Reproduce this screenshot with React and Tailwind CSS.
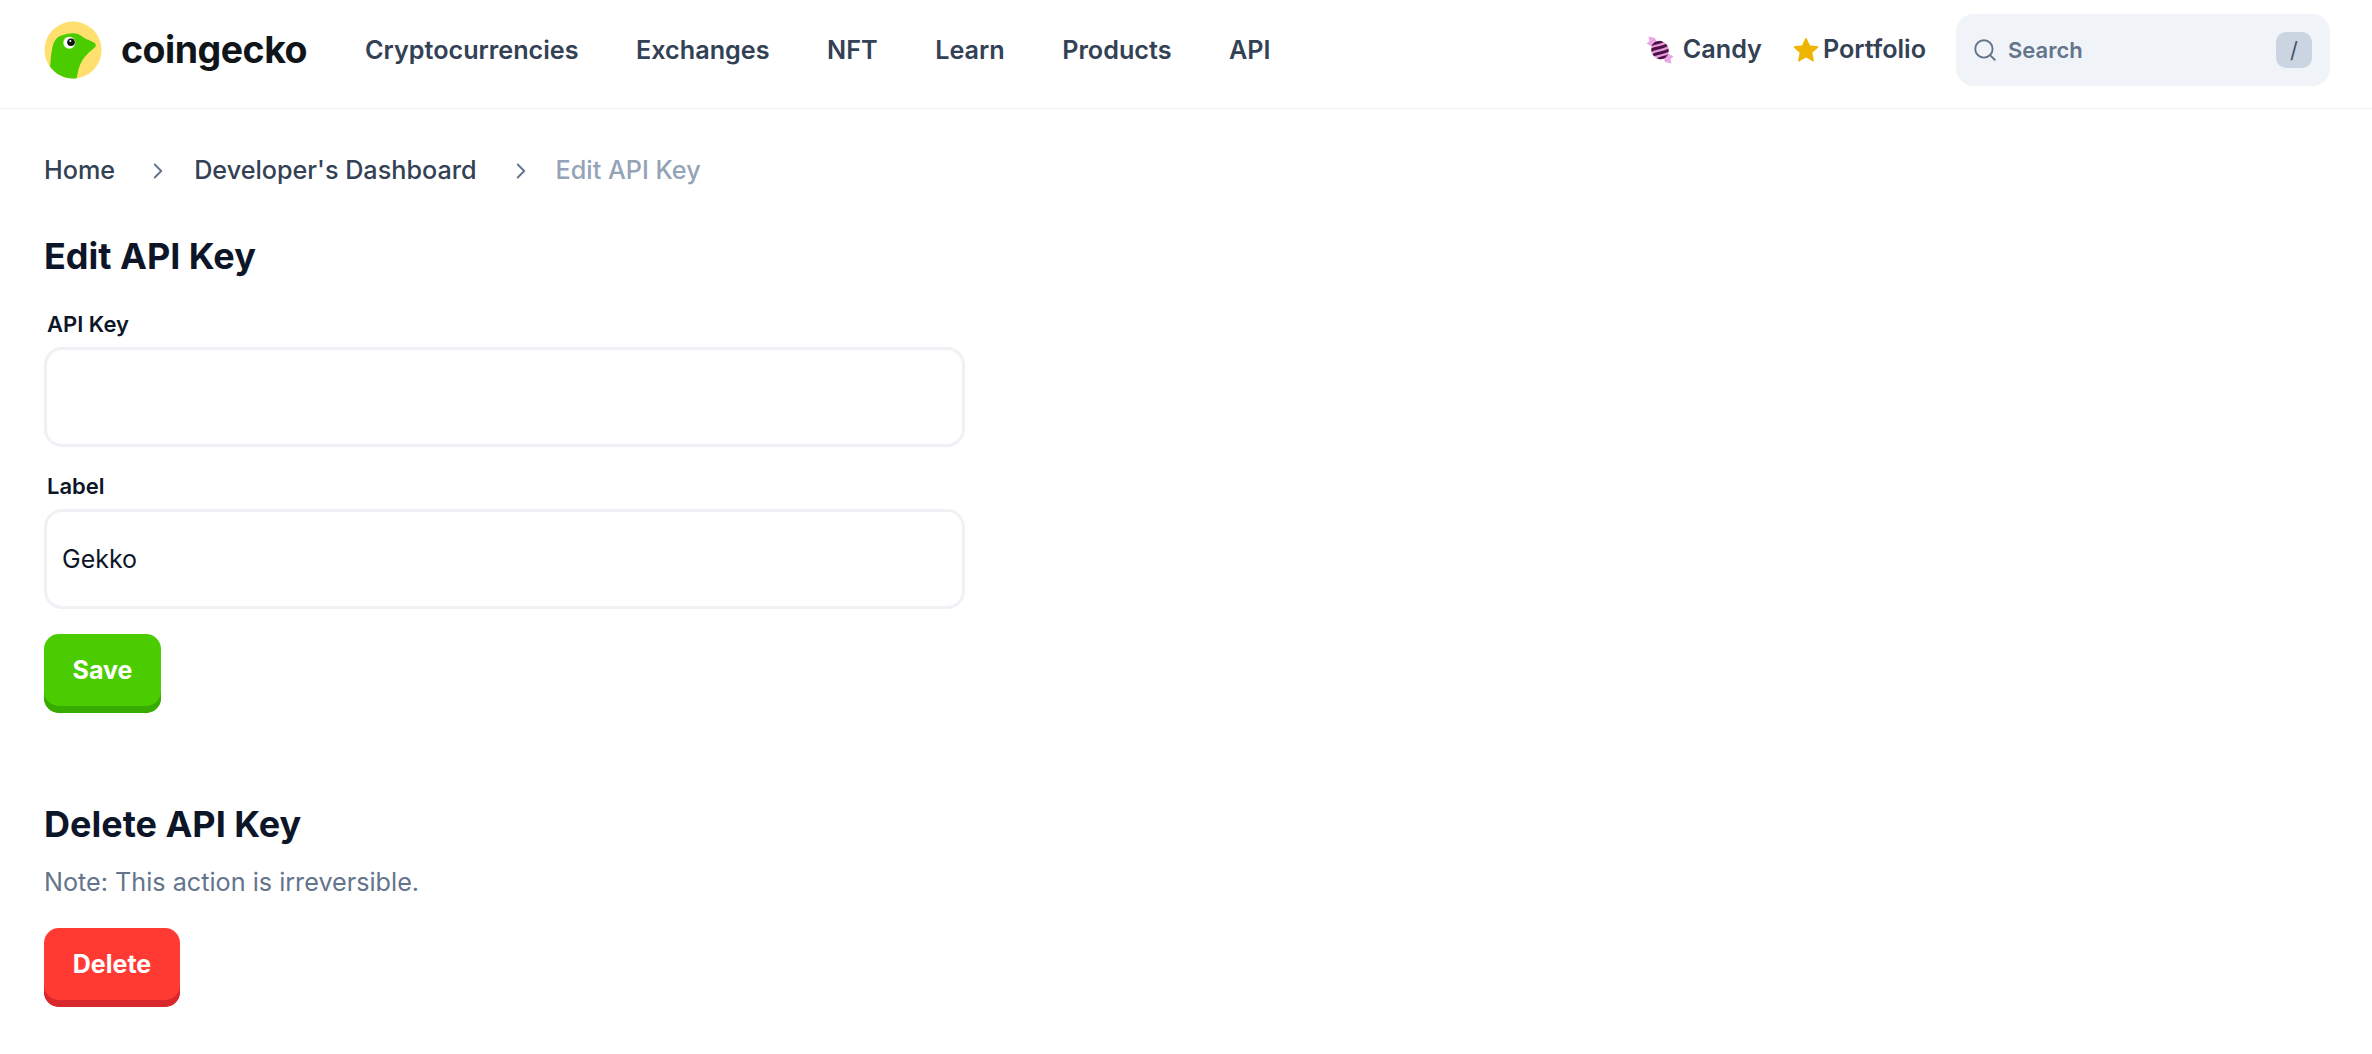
import { Search, ChevronRight } from 'lucide-react';

const navItems = ['Cryptocurrencies', 'Exchanges', 'NFT', 'Learn', 'Products', 'API'];

const GeckoLogo = () => (
  <svg width="58" height="58" viewBox="0 0 58 58" className="shrink-0">
    <circle cx="29" cy="29" r="28.5" fill="#ffe06e" />
    <path
      d="M6 45.5 C7 40 6.5 35 7.7 30.7 C8.5 25 9.5 21 12 18.3 C14 15.5 16.5 14.7 19.3 14 C23 13 26 12 29.3 12.3 C32 12.4 34 13 36 14 C38.5 15.5 40.5 17.2 42.7 18.3 C45.5 19.5 48.5 20.3 51 22.3 C52 23.5 52 25.3 51 26.3 C48 29 45 31 42.7 34 C39.5 37 37.5 40.5 36 44 C34.5 48 33.5 52 32.7 57.3 C22 58.5 12 54 6 45.5 Z"
      fill="#4bcc00"
    />
    <circle cx="25.3" cy="21.7" r="6" fill="#fff" />
    <circle cx="27" cy="21.3" r="3.8" fill="#111" />
    <circle cx="26.3" cy="20" r="1" fill="#fff" />
  </svg>
);

const CandyIcon = () => (
  <svg width="28" height="28" viewBox="0 0 28 28" className="shrink-0">
    <defs>
      <clipPath id="candy-body">
        <ellipse cx="14" cy="14" rx="8.5" ry="9.5" transform="rotate(-35 14 14)" />
      </clipPath>
    </defs>
    <path d="M2.5 0.5 L9 2 L11 7 L6 10.5 L0.5 7.5 L3.5 5 Z" fill="#eaa6e0" />
    <path d="M25.5 27.5 L19 26 L17 21 L22 17.5 L27.5 20.5 L24.5 23 Z" fill="#eaa6e0" />
    <g clipPath="url(#candy-body)">
      <rect width="28" height="28" fill="#e59bd9" />
      <path
        d="M3 10 C9 5 12 9 18 4 M3 15.5 C10 10 14 14 24 7.5 M5 20.5 C12 15 16 19 26 12.5 M9 25.5 C15 20 18 23 26 18"
        stroke="#4a1245"
        strokeWidth="3"
        fill="none"
      />
    </g>
  </svg>
);

const StarIcon = () => (
  <svg width="26" height="26" viewBox="0 0 24 24" className="shrink-0">
    <path
      d="M12 1.5 L15.2 8.2 L22.8 9.2 L17.2 14.3 L18.7 22 L12 18.2 L5.3 22 L6.8 14.3 L1.2 9.2 L8.8 8.2 Z"
      fill="#efb400"
      stroke="#efb400"
      strokeWidth="1.2"
      strokeLinejoin="round"
    />
  </svg>
);

const Field = ({ label, value, className }) => (
  <div className={className}>
    <label className="block pl-[3px] text-[22px] leading-[30px] font-semibold text-[#0d1629]">{label}</label>
    <div className="mt-[8px] flex h-[100px] w-[921px] items-center rounded-[18px] border-[3px] border-[#eff1f5] px-[15px] pt-[2px] text-[25px] text-[#0d1629]">
      {value}
    </div>
  </div>
);

export default function App() {
  return (
    <div className="min-h-[1054px] bg-white font-['Inter',sans-serif]">
      <header className="flex h-[109px] items-center border-b border-[#eff1f5] pr-[42px] pb-[8px] pl-[44px]">
        <GeckoLogo />
        <span className="ml-[19px] w-[187px] text-[37.5px] leading-none font-bold tracking-[-0.5px] text-[#10151a]">coingecko</span>
        <nav className="ml-[57px] flex items-center gap-[57.5px] pt-[2px] text-[25.2px] font-semibold text-[#334155]">
          {navItems.map((item) => (
            <span key={item}>{item}</span>
          ))}
        </nav>
        <div className="ml-auto flex items-center text-[25.2px] font-semibold text-[#334155]">
          <CandyIcon />
          <span className="ml-[9px]">Candy</span>
          <span className="ml-[31px]"><StarIcon /></span>
          <span className="ml-[4px]">Portfolio</span>
          <div className="ml-[30px] flex h-[72px] w-[374px] items-center rounded-[18px] bg-[#f0f3f8] pr-[18px] pl-[16px]">
            <Search size={26} strokeWidth={1.75} className="text-[#64748b]" />
            <span className="ml-[10px] text-[22px] text-[#64748b]">Search</span>
            <span className="ml-auto flex h-[36px] w-[36px] items-center justify-center rounded-[10px] bg-[#cbd5e1] text-[22px] font-normal text-[#475569]">/</span>
          </div>
        </div>
      </header>

      <main className="pl-[44px]">
        <div className="mt-[44px] flex h-[36px] items-center text-[25.2px] font-medium">
          <span className="text-[#334155]">Home</span>
          <ChevronRight size={26} strokeWidth={1.75} className="mr-[23px] ml-[30px] text-[#64748b]" />
          <span className="text-[#334155]">Developer's Dashboard</span>
          <ChevronRight size={26} strokeWidth={1.75} className="mr-[22px] ml-[31px] text-[#64748b]" />
          <span className="text-[#94a3b8]">Edit API Key</span>
        </div>

        <h1 className="mt-[43px] text-[36px] leading-[48px] font-bold text-[#0d1629]">Edit API Key</h1>
        <Field label="API Key" value="" className="mt-[29px]" />
        <Field label="Label" value="Gekko" className="mt-[24px]" />

        <button className="mt-[25px] flex h-[79px] w-[117px] items-center justify-center rounded-[15px] bg-[#4bcc00] pb-[5px] text-[25px] font-bold text-white shadow-[inset_0_-7px_0_#37ab00]">
          Save
        </button>

        <h2 className="mt-[87px] text-[36px] leading-[48px] font-bold text-[#0d1629]">Delete API Key</h2>
        <p className="mt-[16px] text-[25.2px] leading-[36px] text-[#64748b]">Note: This action is irreversible.</p>

        <button className="mt-[28px] flex h-[79px] w-[136px] items-center justify-center rounded-[15px] bg-[#ff3a33] pb-[5px] text-[25px] font-bold text-white shadow-[inset_0_-7px_0_#d9272e]">
          Delete
        </button>
      </main>
    </div>
  );
}
